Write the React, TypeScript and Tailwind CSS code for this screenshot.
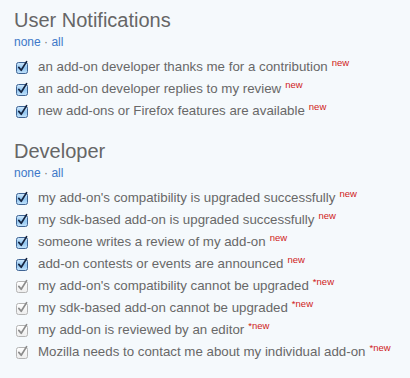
import React from "react";

type Item = { label: string; locked?: boolean };

const userItems: Item[] = [
  { label: "an add-on developer thanks me for a contribution" },
  { label: "an add-on developer replies to my review" },
  { label: "new add-ons or Firefox features are available" },
];

const devItems: Item[] = [
  { label: "my add-on's compatibility is upgraded successfully" },
  { label: "my sdk-based add-on is upgraded successfully" },
  { label: "someone writes a review of my add-on" },
  { label: "add-on contests or events are announced" },
  { label: "my add-on's compatibility cannot be upgraded", locked: true },
  { label: "my sdk-based add-on cannot be upgraded", locked: true },
  { label: "my add-on is reviewed by an editor", locked: true },
  { label: "Mozilla needs to contact me about my individual add-on", locked: true },
];

const Check: React.FC<{ locked?: boolean }> = ({ locked }) => (
  <svg width="14" height="14" viewBox="0 0 14 14" className="shrink-0">
    <defs>
      <linearGradient id="aqua" x1="0" y1="0" x2="0" y2="1">
        <stop offset="0" stopColor="#d2eafd" />
        <stop offset="0.5" stopColor="#92c6f1" />
        <stop offset="1" stopColor="#c4e3fb" />
      </linearGradient>
      <linearGradient id="gray" x1="0" y1="0" x2="0" y2="1">
        <stop offset="0" stopColor="#ffffff" />
        <stop offset="1" stopColor="#ededed" />
      </linearGradient>
    </defs>
    <rect
      x="1.5"
      y="2.5"
      width="11"
      height="11"
      rx="2"
      fill={locked ? "url(#gray)" : "url(#aqua)"}
      stroke={locked ? "#b4b4b4" : "#3f6494"}
    />
    <path
      d="M3.8 7.4 L6.2 10.3 L11.6 1.6"
      fill="none"
      stroke={locked ? "#8c8c8c" : "#14233f"}
      strokeWidth="1.7"
      strokeLinecap="round"
      strokeLinejoin="round"
    />
  </svg>
);

const Section: React.FC<{ title: string; items: Item[]; className?: string }> = ({
  title,
  items,
  className,
}) => (
  <div className={className}>
    <h2 className="text-[20px] leading-[24px] text-[#666]">{title}</h2>
    <div className="mt-[2px] text-[12px] leading-[16px] text-[#3d78c8]">
      <a href="#">none</a>
      <span className="text-[#777]"> · </span>
      <a href="#">all</a>
    </div>
    <ul className="mt-[6px] flex flex-col">
      {items.map((item) => (
        <li key={item.label} className="flex h-[22px] items-center">
          <span className="ml-[1px] mr-[9px] flex w-[14px] items-center">
            <Check locked={item.locked} />
          </span>
          <span className="text-[13.3px] text-[#686868]">
            {item.label}
            <sup className="ml-[4px] text-[9.5px] text-[#d01a1a]">
              {item.locked ? "*" : ""}new
            </sup>
          </span>
        </li>
      ))}
    </ul>
  </div>
);

export default function App() {
  return (
    <div
      className="min-h-[378px] w-[410px] bg-[#f5f9fc] pl-[14px] pt-[8px]"
      style={{ fontFamily: '"Liberation Sans", Arial, sans-serif' }}
    >
      <Section title="User Notifications" items={userItems} />
      <Section title="Developer" items={devItems} className="mt-[17px]" />
    </div>
  );
}
